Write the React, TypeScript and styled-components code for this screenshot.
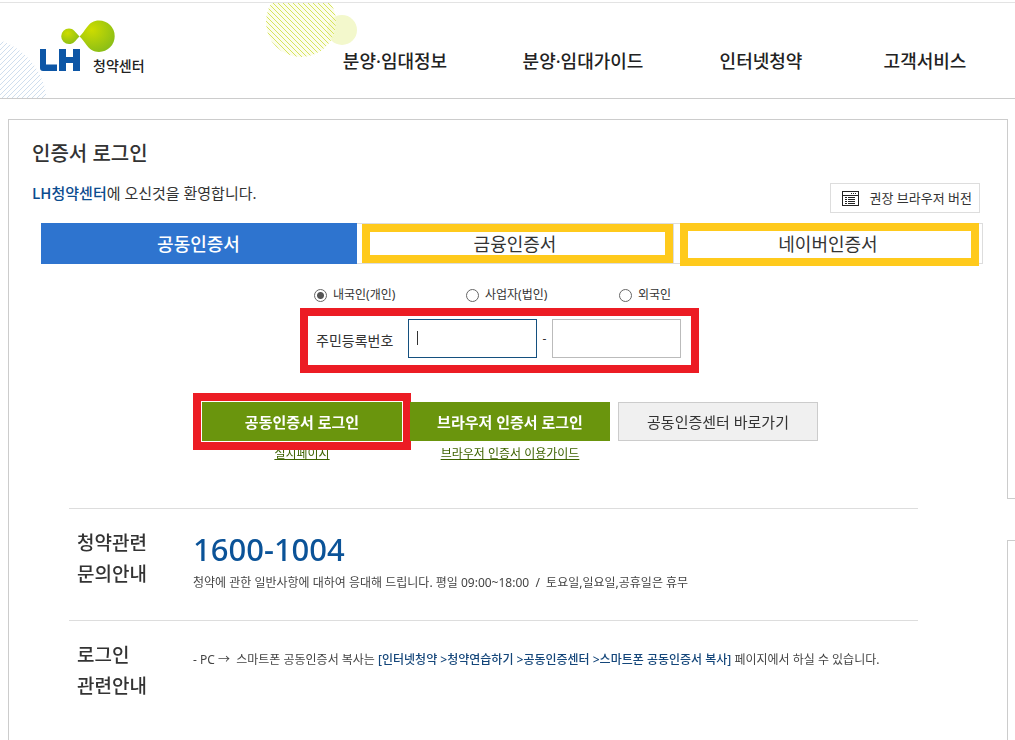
import React from 'react';
import styled, { createGlobalStyle, css } from 'styled-components';

const GlobalStyle = createGlobalStyle`
  *, *::before, *::after { box-sizing: border-box; }
  body {
    margin: 0;
    background: #fff;
    color: #333;
    font-family: "Noto Sans", "Noto Sans CJK KR", sans-serif;
    font-size: 12px;
    line-height: 20px;
  }
  a { color: inherit; text-decoration: none; }
  button, input { font: inherit; color: inherit; }
  h1, h2, p { margin: 0; font-weight: inherit; }
`;

const Page = styled.div`
  display: flex;
  flex-direction: column;
  min-height: 100vh;
`;

const Header = styled.header`
  position: relative;
  display: flex;
  height: 97px;
  margin-top: 2px;
  border-top: 1px solid #e3e3e3;
  border-bottom: 1px solid #ccc;
  overflow: hidden;
`;

const Hatching = styled.svg`
  position: absolute;
  left: 0;
  top: 0;
`;

const Logo = styled.a`
  position: relative;
  display: flex;
  align-items: flex-end;
  height: 73px;
  padding-left: 39px;
`;

const LogoMark = styled.svg`
  display: block;
  margin-right: -24px;
  margin-bottom: 4px;
`;

const LogoText = styled.span`
  font-size: 14px;
  font-weight: 500;
  color: #222;
`;

const Nav = styled.nav`
  position: relative;
  flex: 1;
  display: grid;
  grid-template-columns: 200px 176px 180px 148px;
  justify-content: end;
  align-items: center;
  padding: 20px 16px 0 0;
  font-size: 18px;
  font-weight: 500;
  line-height: 28px;
  color: #222;
  text-align: center;
  white-space: nowrap;
`;

const Body = styled.div`
  flex: 1;
  display: flex;
  padding: 20px 0 0 8px;
`;

const Panel = styled.main`
  flex: 1;
  min-width: 0;
  border: 1px solid #ccc;
  border-width: 1px 0 0 1px;
  padding: 19px 24px 32px 23px;
`;

const Side = styled.aside`
  flex: 0 0 8px;
  display: flex;
  flex-direction: column;
  gap: 41px;
`;

const SideBox = styled.div<{ $fill?: boolean }>`
  border-left: 1px solid #ccc;
  ${(p) =>
    p.$fill
      ? css`flex: 1; border-top: 1px solid #ccc;`
      : css`height: 380px; border-bottom: 1px solid #ccc;`}
`;

const Title = styled.h1`
  font-size: 20px;
  font-weight: 500;
  line-height: 30px;
`;

const Intro = styled.div`
  display: flex;
  justify-content: space-between;
  padding: 14px 3px 10px 0;
`;

const Welcome = styled.p`
  font-size: 15px;
  line-height: 20px;
`;

const Brand = styled.strong`
  font-family: "Noto Sans CJK KR", sans-serif;
  font-weight: 500;
  color: #0b4c8f;
`;

const BrowserButton = styled.button`
  display: flex;
  align-items: center;
  justify-content: space-between;
  width: 150px;
  height: 30px;
  padding: 0 7px 0 11px;
  border: 1px solid #ddd;
  background: #fff;
  font-size: 13px;
  white-space: nowrap;
`;

const Tabs = styled.div`
  display: grid;
  grid-template-columns: 316fr 317fr 309fr;
  height: 41px;
  margin-left: 9px;
`;

const Tab = styled.button<{ $active?: boolean }>`
  position: relative;
  padding: 0;
  border: 1px solid ${(p) => (p.$active ? '#2e74cf' : '#ddd')};
  border-left-width: 0;
  background: ${(p) => (p.$active ? '#2e74cf' : '#fff')};
  color: ${(p) => (p.$active ? '#fff' : '#333')};
  font-size: 18px;
  font-weight: ${(p) => (p.$active ? 500 : 400)};
`;

/* Marker frame drawn over a control */
const Highlight = styled.span<{ $color: string; $inset: string }>`
  position: absolute;
  inset: ${(p) => p.$inset};
  border: 8px solid ${(p) => p.$color};
  pointer-events: none;
`;

const IdForm = styled.form`
  width: 399px;
  margin: 21px auto 0;
  position: static;
  transform: none;
`;

const FormArea = styled.div`
  padding-right: 16px;
`;

const RadioRow = styled.div`
  display: grid;
  grid-template-columns: 152px 153px auto;
  padding: 0 0 3px 14px;
`;

const RadioLabel = styled.label`
  display: flex;
  align-items: center;
  gap: 6px;
  white-space: nowrap;
`;

const Radio = styled.input`
  appearance: none;
  width: 13px;
  height: 13px;
  margin: 0;
  border: 1px solid #666;
  border-radius: 50%;
  background: #fff;
  &:checked {
    background: radial-gradient(circle, #555 3px, #fff 4px);
  }
`;

const IdRow = styled.div`
  display: flex;
  align-items: center;
  height: 65px;
  padding: 0 10px 4px 8px;
  border: 8px solid #ec1c24;
`;

const IdLabel = styled.label`
  flex: 1;
  padding-top: 4px;
  font-size: 14px;
  white-space: nowrap;
`;

const IdInput = styled.input`
  width: 129px;
  height: 39px;
  padding: 0 8px;
  border: 1px solid #bbb;
  background: #fff;
  outline: 0;
  font-size: 14px;
  &:focus { border-color: #14507f; }
  &:focus:placeholder-shown {
    caret-color: transparent;
    background: linear-gradient(#333, #333) 8px 11px / 1px 14px no-repeat #fff;
  }
`;

const Dash = styled.span`
  width: 15px;
  text-align: center;
`;

const Actions = styled.div`
  display: flex;
  justify-content: center;
  gap: 8px;
  margin: 29px 0 44px;
  padding-left: 5px;
`;

const Action = styled.div`
  position: relative;
  display: flex;
  flex-direction: column;
  align-items: center;
  width: 200px;
`;

const ActionButton = styled.button<{ $plain?: boolean }>`
  width: 100%;
  height: 39px;
  padding: 0;
  border: 1px solid ${(p) => (p.$plain ? '#ccc' : '#6a950d')};
  background: ${(p) => (p.$plain ? '#f0f0f0' : '#6a950d')};
  color: ${(p) => (p.$plain ? '#333' : '#fff')};
  font-size: 15px;
  font-weight: ${(p) => (p.$plain ? 400 : 700)};
`;

const GuideLink = styled.a`
  margin-top: 3px;
  color: #3d6200;
  text-decoration: underline;
`;

const Info = styled.section`
  display: flex;
  height: 112px;
  margin: 0 65px 0 37px;
  padding: 19px 0 0 8px;
  border-top: 1px solid #ddd;
`;

const InfoTitle = styled.h2`
  width: 116px;
  font-size: 19px;
  font-weight: 500;
  line-height: 31px;
`;

const Phone = styled.p`
  margin: 5px 0 8px;
  font-size: 31px;
  font-weight: 500;
  line-height: 32px;
  color: #0b5398;
`;

const Note = styled.p`
  color: #444;
  white-space: nowrap;
`;

const SpacedNote = styled(Note)`
  padding-top: 10px;
`;

const PathText = styled.strong`
  font-weight: 500;
  color: #14467a;
`;

const range = (n: number) => Array.from({ length: n }, (_, i) => i);

const BrowserIcon = () => (
  <svg width="17" height="15" viewBox="0 0 17 15" shapeRendering="crispEdges" aria-hidden="true">
    <path d="M0 0h17v15H0zM1 1v3h15V1zM1 5v9h15V5z" fill="#222" fillRule="evenodd" />
    <path d="M9 2.500h1M11 2.500h1M13 2.500h1M3 6.500h2M6 6.500h7M3 8.500h2M6 8.500h7M3 10.500h2M6 10.500h7M3 12.500h2M6 12.500h7" stroke="#222" />
  </svg>
);

export default function App() {
  return (
    <Page>
      <GlobalStyle />
      <Header>
        <Hatching width="360" height="95" viewBox="0 3 360 95" aria-hidden="true">
          <defs>
            <clipPath id="blueDisc"><circle cx="-21" cy="105" r="68" /></clipPath>
            <clipPath id="limeDisc"><circle cx="301" cy="22" r="35" /></clipPath>
          </defs>
          <g clipPath="url(#blueDisc)" stroke="#c3d6ea" strokeWidth="0.8">
            {range(36).map((i) => (
              <path key={i} d={`M-10 ${40 + i * 5}l80 -80`} />
            ))}
          </g>
          <circle cx="342" cy="30" r="15" fill="#f3f8cc" />
          <g clipPath="url(#limeDisc)" stroke="#d3e04c" strokeWidth="0.9">
            <path d="M260 -20h90v90h-90z" fill="#fafce0" fillOpacity="0.6" stroke="none" />
            {range(40).map((i) => (
              <path key={i} d={`M260 ${-90 + i * 5}l90 90`} />
            ))}
          </g>
        </Hatching>
        <Logo href="#" aria-label="LH 청약센터">
          <LogoMark width="78" height="52" viewBox="39 20 78 52" aria-hidden="true">
            <defs>
              <radialGradient id="drop" cx="0.35" cy="0.3" r="0.8">
                <stop offset="0" stopColor="#cddc00" />
                <stop offset="1" stopColor="#86bc18" />
              </radialGradient>
            </defs>
            <path d="M79.500 36.500C75 32 73.500 28.500 69 28.500a7.800 7.800 0 0 0 0 15.600C73.500 44.100 75 41 79.500 36.500z" fill="url(#drop)" />
            <path d="M79.500 36.500C86 31 88 20.500 99 20.500a15.700 15.700 0 0 1 0 31.400C88 51.900 86 42 79.500 36.500z" fill="url(#drop)" />
            <path d="M40 49h6v15.500h11V71H43q-3 0-3-3zM59 49h7v8h7v-8h7v22h-7v-8h-7v8h-7z" fill="#0d56a6" />
          </LogoMark>
          <LogoText>청약센터</LogoText>
        </Logo>
        <Nav aria-label="주 메뉴">
          <a href="#">분양·임대정보</a>
          <a href="#">분양·임대가이드</a>
          <a href="#">인터넷청약</a>
          <a href="#">고객서비스</a>
        </Nav>
      </Header>
      <Body>
        <Panel>
          <Title>인증서 로그인</Title>
          <Intro>
            <Welcome><Brand>LH청약센터</Brand>에 오신것을 환영합니다.</Welcome>
            <BrowserButton type="button"><BrowserIcon />권장 브라우저 버전</BrowserButton>
          </Intro>
          <Tabs role="tablist">
            <Tab type="button" role="tab" aria-selected $active>공동인증서</Tab>
            <Tab type="button" role="tab">금융인증서<Highlight $color="#ffca1c" $inset="0 0 0 5px" /></Tab>
            <Tab type="button" role="tab">네이버인증서<Highlight $color="#ffca1c" $inset="-1px 3px -3px 6px" /></Tab>
          </Tabs>
          <FormArea>
            <IdForm>
              <RadioRow role="radiogroup" aria-label="구분">
                <RadioLabel><Radio type="radio" name="kind" defaultChecked />내국인(개인)</RadioLabel>
                <RadioLabel><Radio type="radio" name="kind" />사업자(법인)</RadioLabel>
                <RadioLabel><Radio type="radio" name="kind" />외국인</RadioLabel>
              </RadioRow>
              <IdRow>
                <IdLabel htmlFor="id-front">주민등록번호</IdLabel>
                <IdInput id="id-front" type="text" placeholder=" " autoFocus />
                <Dash>-</Dash>
                <IdInput type="text" aria-label="주민등록번호 뒷자리" />
              </IdRow>
            </IdForm>
          </FormArea>
          <Actions>
            <Action>
              <ActionButton type="button">공동인증서 로그인</ActionButton>
              <GuideLink href="#">설치페이지</GuideLink>
              <Highlight $color="#ec1c24" $inset="-9px -9px 14px -9px" />
            </Action>
            <Action>
              <ActionButton type="button">브라우저 인증서 로그인</ActionButton>
              <GuideLink href="#">브라우저 인증서 이용가이드</GuideLink>
            </Action>
            <Action>
              <ActionButton type="button" $plain>공동인증센터 바로가기</ActionButton>
            </Action>
          </Actions>
          <Info>
            <InfoTitle>청약관련<br />문의안내</InfoTitle>
            <div>
              <Phone>1600-1004</Phone>
              <Note>청약에 관한 일반사항에 대하여 응대해 드립니다. 평일 09:00~18:00 &nbsp;/&nbsp; 토요일,일요일,공휴일은 휴무</Note>
            </div>
          </Info>
          <Info>
            <InfoTitle>로그인<br />관련안내</InfoTitle>
            <SpacedNote>
              - PC → &nbsp;스마트폰 공동인증서 복사는 <PathText>[인터넷청약 &gt;청약연습하기 &gt;공동인증센터 &gt;스마트폰 공동인증서 복사]</PathText> 페이지에서 하실 수 있습니다.
            </SpacedNote>
          </Info>
        </Panel>
        <Side aria-hidden="true">
          <SideBox />
          <SideBox $fill />
        </Side>
      </Body>
    </Page>
  );
}
